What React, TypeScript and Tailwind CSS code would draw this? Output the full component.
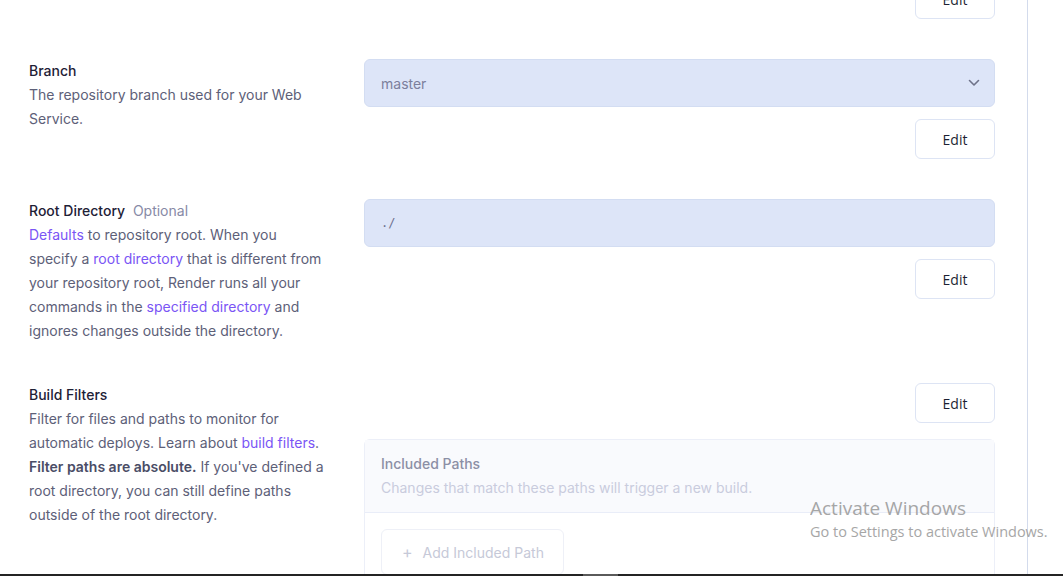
import React from "react";

const font = { fontFamily: "Inter, 'Noto Sans', sans-serif" };

function EditButton({ className = "" }: { className?: string }) {
  return (
    <div className={`flex justify-end ${className}`}>
      <button
        className="h-[40px] w-[80px] rounded-[6px] border border-[#dde4f4] bg-white text-[14px] font-medium text-[#1c1f33]"
        style={{ fontFamily: "'Open Sans', 'Noto Sans', sans-serif" }}
      >
        Edit
      </button>
    </div>
  );
}

function Link({ children }: { children: React.ReactNode }) {
  return <span className="text-[#7a55f5]">{children}</span>;
}

export default function App() {
  return (
    <div className="relative h-[576px] w-[1063px] overflow-hidden bg-white" style={font}>
      <div className="flow-root h-full w-[1028px] border-r border-[#d3dbec] pl-[29px] pr-[32px]">
        <div className="mt-[-21px] ml-[335px]">
          <EditButton />
        </div>

        {/* Branch */}
        <div className="mt-[40px] flex gap-[35px]">
          <div className="w-[300px] shrink-0 text-[14px] leading-[24px]">
            <div className="font-medium text-[#1e2136]">Branch</div>
            <div className="text-[#5d6078]">The repository branch used for your Web Service.</div>
          </div>
          <div className="flex-1">
            <div className="flex h-[48px] items-center justify-between rounded-[6px] border border-[#d3ddf2] bg-[#dde5f8] pl-[16px] pr-[14px]">
              <span className="text-[14px] text-[#7c7f9c]">master</span>
              <svg width="12" height="8" viewBox="0 0 12 8" fill="none">
                <path d="M1.5 1.5 6 6l4.5-4.5" stroke="#6e7289" strokeWidth="1.6" strokeLinecap="round" strokeLinejoin="round" />
              </svg>
            </div>
            <EditButton className="mt-[12px]" />
          </div>
        </div>

        {/* Root Directory */}
        <div className="mt-[40px] flex gap-[35px]">
          <div className="w-[300px] shrink-0 text-[14px] leading-[24px]">
            <div className="font-medium text-[#1e2136]">
              Root Directory <span className="ml-[4px] font-normal text-[#878aa6]">Optional</span>
            </div>
            <div className="text-[#5d6078]">
              <Link>Defaults</Link> to repository root. When you specify a <Link>root directory</Link> that is
              different from your repository root, Render runs all your commands in the{" "}
              <Link>specified directory</Link> and ignores changes outside the directory.
            </div>
          </div>
          <div className="flex-1">
            <div className="flex h-[48px] items-center rounded-[6px] border border-[#d3ddf2] bg-[#dde5f8] pl-[16px]">
              <span className="text-[#6e7290]" style={{ fontFamily: "'DejaVu Sans Mono', monospace", fontSize: 12 }}>
                ./
              </span>
            </div>
            <EditButton className="mt-[12px]" />
          </div>
        </div>

        {/* Build Filters */}
        <div className="mt-[40px] flex gap-[35px]">
          <div className="w-[300px] shrink-0 text-[14px] leading-[24px]">
            <div className="font-medium text-[#1e2136]">Build Filters</div>
            <div className="text-[#5d6078]">
              Filter for files and paths to monitor for automatic deploys. Learn about{" "}
              <Link>build filters</Link>. <span className="font-semibold text-[#4a4d66]">Filter paths are absolute.</span>{" "}
              If you've defined a root directory, you can still define paths outside of the root directory.
            </div>
          </div>
          <div className="flex-1">
            <EditButton />
            <div className="mt-[16px] rounded-[6px] border border-[#eceff8]">
              <div className="border-b border-[#e9edf8] bg-[#f9fafd] px-[16px] py-[12px] text-[14px] leading-[24px]">
                <div className="font-medium text-[#8c8fa5]">Included Paths</div>
                <div className="text-[#c9ccdd]">Changes that match these paths will trigger a new build.</div>
              </div>
              <div className="bg-white p-[16px]">
                <div className="flex h-[46px] w-[183px] items-center gap-[10px] rounded-[6px] border border-[#eef0f7] pl-[20px] text-[14px] text-[#c6c9d8]">
                  <span className="text-[16px]">+</span>
                  <span>Add Included Path</span>
                </div>
              </div>
            </div>
          </div>
        </div>
      </div>

      {/* Windows activation watermark */}
      <div
        className="pointer-events-none absolute left-[810px] top-[496px] text-[#9d9d9d] opacity-90"
        style={{ fontFamily: "'Open Sans', 'Noto Sans', sans-serif" }}
      >
        <div className="text-[19px] leading-[25px]">Activate Windows</div>
        <div className="text-[14.5px] leading-[21px]">Go to Settings to activate Windows.</div>
      </div>

      {/* bottom bar */}
      <div className="absolute bottom-0 left-0 flex h-[2px] w-full bg-[#242424]">
        <div className="ml-[583px] h-full w-[35px] bg-[#5a5a5a]" />
      </div>
    </div>
  );
}
